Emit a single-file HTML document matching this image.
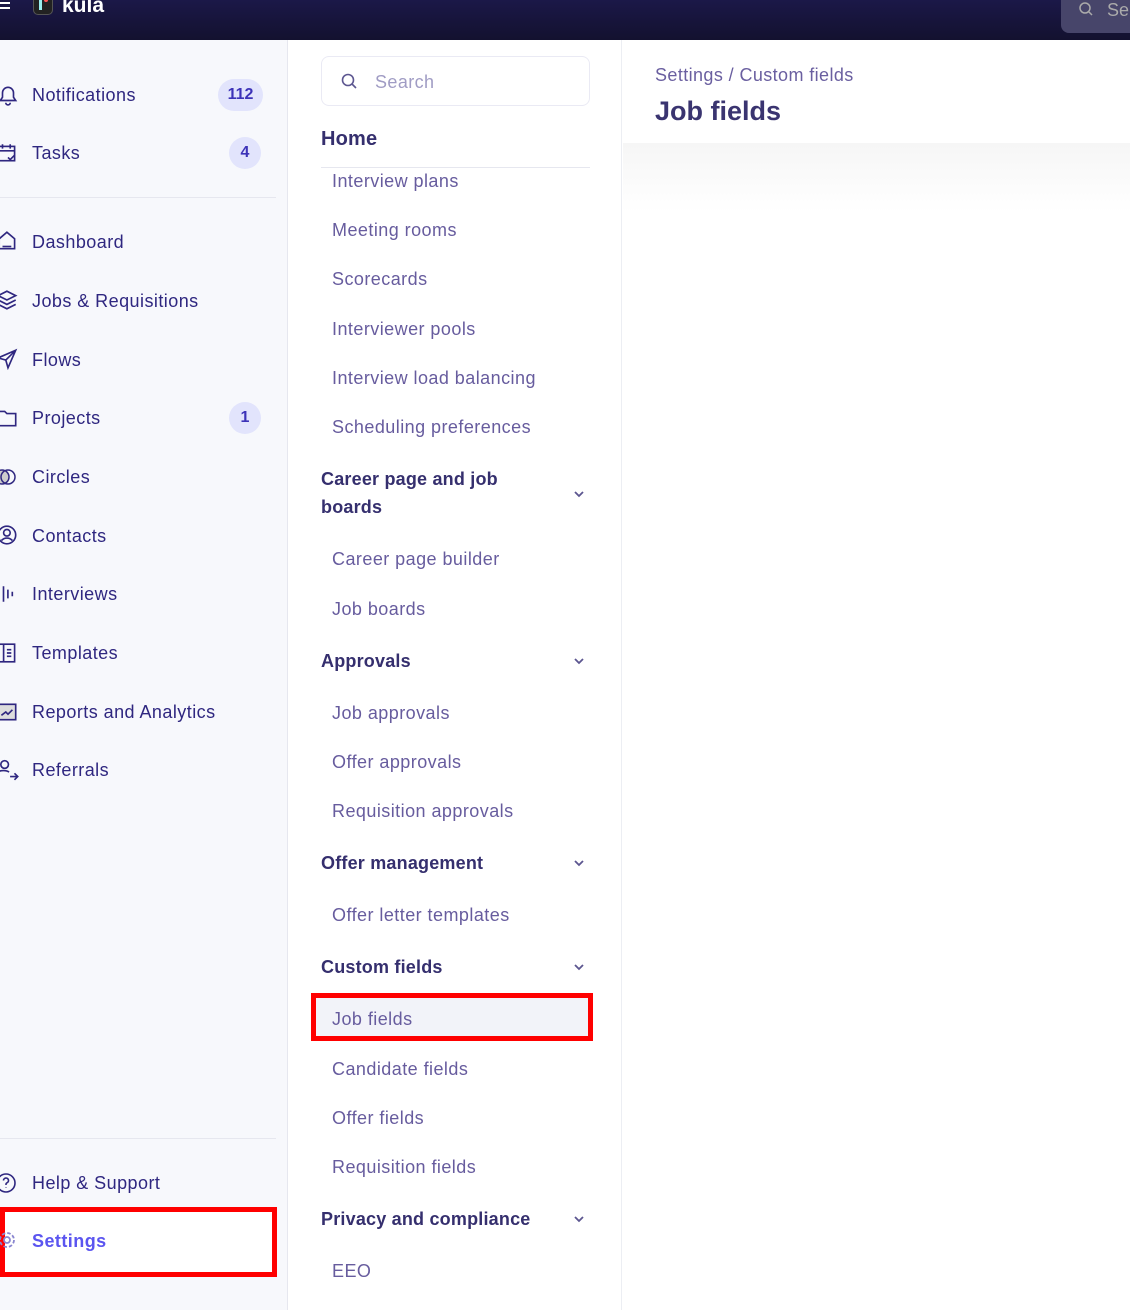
<!DOCTYPE html>
<html><head><meta charset="utf-8"><style>
*{margin:0;padding:0;box-sizing:border-box}
body{width:1130px;height:1310px;overflow:hidden;font-family:"Liberation Sans",sans-serif;background:#fff;position:relative}
.top{position:absolute;left:0;top:0;width:1130px;height:40px;background:linear-gradient(#1b1848,#13112f)}
.side{position:absolute;left:0;top:40px;width:288px;height:1270px;background:#f7f8fc;border-right:1px solid #e6e7ef}
.mid{position:absolute;left:289px;top:40px;width:333px;height:1270px;background:#fff;border-right:1px solid #eceef3}
.ni{position:absolute;left:32px;font-size:18px;color:#2f2780;margin-top:1px;letter-spacing:0.45px}
.badge{position:absolute;height:32px;border-radius:16px;background:#e2e4fc;color:#3d33b8;font-weight:bold;font-size:16px;text-align:center;line-height:32px}
.sub{position:absolute;left:332px;font-size:18px;color:#675c9e;margin-top:1px;letter-spacing:0.45px}
.hd{position:absolute;left:321px;font-size:18px;font-weight:bold;color:#352f6e;margin-top:1px;letter-spacing:0.2px}
.chev{position:absolute;left:573px;width:12px;height:8px}
.hr{position:absolute;height:1px;background:#e6e7ef}
</style></head><body>
<div class="top">
 <div style="position:absolute;left:0;top:2px;width:10px;height:2px;background:#fff;box-shadow:0 5px 0 #fff"></div>
 <div style="position:absolute;left:33px;top:-6px;width:20px;height:21px;border-radius:5px;background:#222;border:1px solid #555"><div style="position:absolute;left:5px;top:3px;width:3px;height:12px;background:#9ee"></div><div style="position:absolute;left:10px;top:3px;width:4px;height:4px;border-radius:50%;background:#f55"></div></div>
 <div style="position:absolute;left:62px;top:-6px;color:#fff;font-size:21px;font-weight:bold">kula</div>
 <div style="position:absolute;left:1061px;top:-10px;width:80px;height:43px;border-radius:8px;background:#47456a"><span style="position:absolute;left:46px;top:10px;color:#aaa;font-size:18px">Se</span><svg style="position:absolute;left:18px;top:12px" width="14" height="14" viewBox="0 0 14 14" fill="none" stroke="#aaa" stroke-width="1.5"><circle cx="6" cy="6" r="5"/><path d="M10 10l3 3"/></svg></div>
</div>
<div class="side">
 <div class="hr" style="left:0;top:157px;width:276px"></div>
 <div class="hr" style="left:0;top:1098px;width:276px"></div>
</div>
<div class="ni" style="top:84px">Notifications</div><div class="badge" style="left:218px;top:79px;width:45px">112</div>
<div class="ni" style="top:142px">Tasks</div><div class="badge" style="left:229px;top:137px;width:32px">4</div>
<div class="ni" style="top:231px">Dashboard</div>
<div class="ni" style="top:290px">Jobs &amp; Requisitions</div>
<div class="ni" style="top:349px">Flows</div>
<div class="ni" style="top:407px">Projects</div><div class="badge" style="left:229px;top:402px;width:32px">1</div>
<div class="ni" style="top:466px">Circles</div>
<div class="ni" style="top:525px">Contacts</div>
<div class="ni" style="top:583px">Interviews</div>
<div class="ni" style="top:642px">Templates</div>
<div class="ni" style="top:701px">Reports and Analytics</div>
<div class="ni" style="top:759px">Referrals</div>
<div class="ni" style="top:1172px">Help &amp; Support</div>
<svg style="position:absolute;left:-4px;top:1172px" width="22" height="22" viewBox="0 0 22 22" fill="none" stroke="#2f2780" stroke-width="1.6"><circle cx="10" cy="11" r="9"/><path d="M7.5 8.5a2.5 2.5 0 1 1 3.5 2.3c-.7.3-1 .8-1 1.5v.7M10 15.5v.5"/></svg>
<div style="position:absolute;left:0;top:1207px;width:277px;height:70px;border:5px solid #f00;background:#fff"></div>
<div class="ni" style="top:1230px;color:#5b55f0;font-weight:bold">Settings</div>
<svg style="position:absolute;left:-3px;top:1230px" width="20" height="20" viewBox="0 0 20 20" fill="none" stroke="#8a86d0" stroke-width="1.8"><circle cx="10" cy="10" r="3"/><circle cx="10" cy="10" r="7" stroke-dasharray="3.5 2"/></svg>
<svg style="position:absolute;left:-3px;top:84px" width="22" height="22" viewBox="0 0 20 20" fill="none" stroke="#2f2780" stroke-width="1.5"><path d="M3 15h14l-2-3V8a5 5 0 0 0-10 0v4zM8 17a2 2 0 0 0 4 0"/></svg>
<svg style="position:absolute;left:-3px;top:142px" width="22" height="22" viewBox="0 0 20 20" fill="none" stroke="#2f2780" stroke-width="1.5"><rect x="1" y="4" width="15" height="13"/><path d="M1 8h15M5 2v4M12 2v4M10 14l2 2 4-4"/></svg>
<svg style="position:absolute;left:-3px;top:230px" width="22" height="22" viewBox="0 0 20 20" fill="none" stroke="#2f2780" stroke-width="1.5"><path d="M2 8l7-6 7 6v9H2z"/><path d="M5 15h8"/></svg>
<svg style="position:absolute;left:-3px;top:289px" width="22" height="22" viewBox="0 0 20 20" fill="none" stroke="#2f2780" stroke-width="1.5"><path d="M1 6l8-4 8 4-8 4zM1 10l8 4 8-4M1 14l8 4 8-4"/></svg>
<svg style="position:absolute;left:-3px;top:348px" width="22" height="22" viewBox="0 0 20 20" fill="none" stroke="#2f2780" stroke-width="1.5"><path d="M17 2L1 9l7 2 2 7zM8 11l9-9"/></svg>
<svg style="position:absolute;left:-3px;top:407px" width="22" height="22" viewBox="0 0 20 20" fill="none" stroke="#2f2780" stroke-width="1.5"><path d="M1 4h6l2 2h8v11H1z"/></svg>
<svg style="position:absolute;left:-5px;top:466px" width="22" height="22" viewBox="0 0 22 20" fill="none" stroke="#2f2780" stroke-width="1.5"><circle cx="7" cy="10" r="7" fill="#ccc"/><circle cx="13" cy="10" r="7"/></svg>
<svg style="position:absolute;left:-3px;top:524px" width="22" height="22" viewBox="0 0 20 20" fill="none" stroke="#2f2780" stroke-width="1.5"><circle cx="9" cy="10" r="8"/><circle cx="9" cy="8" r="3"/><path d="M4 15c3-3 7-3 10 0"/></svg>
<svg style="position:absolute;left:-2px;top:583px" width="22" height="22" viewBox="0 0 20 20" fill="none" stroke="#2f2780" stroke-width="1.5"><path d="M1 7v6M5 3v14M9 6v8M13 8v4"/></svg>
<svg style="position:absolute;left:-3px;top:642px" width="22" height="22" viewBox="0 0 20 20" fill="none" stroke="#2f2780" stroke-width="1.5"><rect x="1" y="2" width="15" height="16"/><path d="M6 2v16M9 7h4M9 10h4M9 13h4"/></svg>
<svg style="position:absolute;left:-3px;top:701px" width="22" height="22" viewBox="0 0 20 20" fill="none" stroke="#2f2780" stroke-width="1.5"><rect x="1" y="3" width="16" height="14" fill="#ddd"/><path d="M4 13l4-3 2 2 4-4"/></svg>
<svg style="position:absolute;left:-3px;top:758px" width="24" height="24" viewBox="0 0 22 22" fill="none" stroke="#2f2780" stroke-width="1.5"><circle cx="7" cy="6" r="3.5"/><path d="M1 13c2-2 8-2 10 0M12 17h7M16 14l3 3-3 3"/></svg>
<div class="mid"></div>
<div style="position:absolute;left:321px;top:56px;width:269px;height:50px;border:1px solid #eaeaf4;border-radius:8px"></div>
<svg style="position:absolute;left:341px;top:73px" width="17" height="17" viewBox="0 0 17 17" fill="none" stroke="#5c5690" stroke-width="1.6"><circle cx="7" cy="7" r="5.5"/><path d="M11 11l4 4"/></svg>
<div style="position:absolute;left:375px;top:72px;font-size:18px;color:#a09cc4;letter-spacing:0.4px">Search</div>
<div class="hd" style="top:127px;font-size:20px">Home</div>
<div class="hr" style="left:321px;top:167px;width:269px"></div>
<div class="sub" style="top:170px">Interview plans</div>
<div class="sub" style="top:219px">Meeting rooms</div>
<div class="sub" style="top:268px">Scorecards</div>
<div class="sub" style="top:318px">Interviewer pools</div>
<div class="sub" style="top:367px">Interview load balancing</div>
<div class="sub" style="top:416px">Scheduling preferences</div>
<div class="hd" style="top:464px;line-height:28px">Career page and job<br>boards</div>
<div class="sub" style="top:548px">Career page builder</div>
<div class="sub" style="top:598px">Job boards</div>
<div class="hd" style="top:650px">Approvals</div>
<div class="sub" style="top:702px">Job approvals</div>
<div class="sub" style="top:751px">Offer approvals</div>
<div class="sub" style="top:800px">Requisition approvals</div>
<div class="hd" style="top:852px">Offer management</div>
<div class="sub" style="top:904px">Offer letter templates</div>
<div class="hd" style="top:956px">Custom fields</div>
<div style="position:absolute;left:311px;top:993px;width:282px;height:48px;border:5px solid #f00;background:#f2f3f9"></div>
<div class="sub" style="top:1008px">Job fields</div>
<div class="sub" style="top:1058px">Candidate fields</div>
<div class="sub" style="top:1107px">Offer fields</div>
<div class="sub" style="top:1156px">Requisition fields</div>
<div class="hd" style="top:1208px">Privacy and compliance</div>
<div class="sub" style="top:1260px">EEO</div>
<svg class="chev" style="top:490px" viewBox="0 0 12 8" fill="none" stroke="#5c5690" stroke-width="1.8"><path d="M2 2l4 4 4-4"/></svg>
<svg class="chev" style="top:657px" viewBox="0 0 12 8" fill="none" stroke="#5c5690" stroke-width="1.8"><path d="M2 2l4 4 4-4"/></svg>
<svg class="chev" style="top:859px" viewBox="0 0 12 8" fill="none" stroke="#5c5690" stroke-width="1.8"><path d="M2 2l4 4 4-4"/></svg>
<svg class="chev" style="top:963px" viewBox="0 0 12 8" fill="none" stroke="#5c5690" stroke-width="1.8"><path d="M2 2l4 4 4-4"/></svg>
<svg class="chev" style="top:1215px" viewBox="0 0 12 8" fill="none" stroke="#5c5690" stroke-width="1.8"><path d="M2 2l4 4 4-4"/></svg>
<div style="position:absolute;left:623px;top:143px;width:507px;height:70px;background:linear-gradient(#f6f6f6,#fff)"></div>
<div style="position:absolute;left:655px;top:65px;font-size:18px;color:#6a5fa0;letter-spacing:0.4px">Settings / Custom fields</div>
<div style="position:absolute;left:655px;top:96px;font-size:27px;font-weight:bold;color:#3a3470">Job fields</div>
</body></html>
